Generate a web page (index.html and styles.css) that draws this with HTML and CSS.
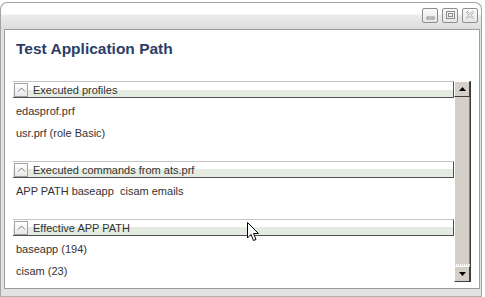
FILE: index.html
```html
<!DOCTYPE html>
<html lang="en">
<head>
    <meta charset="UTF-8">
    <title>Test Application Path</title>
    <link rel="stylesheet" href="styles.css">
</head>
<body>
    <div class="window">
        <div class="titlebar">
            <span class="winbtn">
                <svg width="14" height="13" viewBox="0 0 14 13"><rect x="4" y="8" width="7" height="2" fill="none" stroke="#8c8c8c" stroke-width="1"/></svg>
            </span>
            <span class="winbtn">
                <svg width="14" height="13" viewBox="0 0 14 13"><rect x="3.5" y="2.5" width="8" height="7" fill="none" stroke="#8c8c8c"/><rect x="5.5" y="4.5" width="4" height="3" fill="none" stroke="#8c8c8c"/></svg>
            </span>
            <span class="winbtn">
                <svg width="14" height="13" viewBox="0 0 14 13"><path d="M3.5 2.5 L10.5 9.5 M10.5 2.5 L3.5 9.5" stroke="#b4b4b4" stroke-width="2.2" fill="none"/><path d="M3.5 2.5 L10.5 9.5 M10.5 2.5 L3.5 9.5" stroke="#ffffff" stroke-width="0.8" fill="none"/></svg>
            </span>
        </div>
        <div class="panel">
            <h1 class="title">Test Application Path</h1>
            <div class="scroller">
                <div class="content">
                    <div class="section">
                        <div class="sec-head">
                            <span class="toggle"><svg width="9" height="7" viewBox="0 0 9 7"><path d="M1 5.5 L4.5 2 L8 5.5" stroke="#7a7a7a" fill="none"/></svg></span>
                            <span class="sec-label">Executed profiles</span>
                        </div>
                        <div class="item">edasprof.prf</div>
                        <div class="item">usr.prf (role Basic)</div>
                    </div>
                    <div class="section">
                        <div class="sec-head">
                            <span class="toggle"><svg width="9" height="7" viewBox="0 0 9 7"><path d="M1 5.5 L4.5 2 L8 5.5" stroke="#7a7a7a" fill="none"/></svg></span>
                            <span class="sec-label">Executed commands from ats.prf</span>
                        </div>
                        <div class="item">APP PATH baseapp&nbsp; cisam emails</div>
                    </div>
                    <div class="section">
                        <div class="sec-head">
                            <span class="toggle"><svg width="9" height="7" viewBox="0 0 9 7"><path d="M1 5.5 L4.5 2 L8 5.5" stroke="#7a7a7a" fill="none"/></svg></span>
                            <span class="sec-label">Effective APP PATH</span>
                        </div>
                        <div class="item">baseapp (194)</div>
                        <div class="item">cisam (23)</div>
                    </div>
                </div>
                <div class="scrollbar">
                    <span class="sb-btn"><svg width="7" height="4" viewBox="0 0 7 4"><path d="M3.5 0 L7 4 L0 4 Z" fill="#000"/></svg></span>
                    <span class="sb-thumb"></span>
                    <span class="sb-rest"></span>
                    <span class="sb-btn"><svg width="7" height="4" viewBox="0 0 7 4"><path d="M0 0 L7 0 L3.5 4 Z" fill="#000"/></svg></span>
                </div>
            </div>
        </div>
        <svg class="cursor" width="13" height="20" viewBox="0 0 13 20">
            <path d="M0.5 0.5 L0.5 16 L4 12.5 L6.5 18.5 L9 17.5 L6.5 11.5 L11.5 11.5 Z" fill="#fff" stroke="#000" stroke-width="1"/>
        </svg>
    </div>
</body>
</html>
```

FILE: styles.css
```css
body {
    margin: 0;
    background: #ffffff;
    font-family: "Liberation Sans", Arial, sans-serif;
}
.window {
    position: relative;
    width: 480px;
    height: 293px;
    margin-top: 2px;
    border: 1px solid #a4a4a4;
    border-bottom-color: #b0b0b0;
    border-radius: 7px 7px 0 0;
    background: #e2e2e2;
}
.titlebar {
    height: 26px;
    display: flex;
    justify-content: flex-end;
    gap: 4px;
    padding: 5px 3px 0 0;
    box-sizing: border-box;
    border-radius: 7px 7px 0 0;
    background: linear-gradient(#ffffff 0, #ffffff 11px, #ececec 12px, #dddddd 26px);
}
.winbtn {
    width: 14px;
    height: 13px;
    border: 1px solid #8e8e8e;
    border-radius: 2px;
    background: linear-gradient(#fbfbfb, #e6e6e6);
    display: flex;
}
.panel {
    margin: 0 1px 0 3px;
    height: 260px;
    border: 1px solid #9c9c9c;
    background: #ffffff;
    box-sizing: border-box;
}
.title {
    margin: 0;
    padding: 9px 0 0 11px;
    height: 51px;
    box-sizing: border-box;
    font-size: 15.5px;
    line-height: 19px;
    font-weight: bold;
    color: #2c3e68;
}
.scroller {
    display: flex;
    margin-left: 8px;
    width: 458px;
    height: 201px;
    overflow: hidden;
}
.content {
    flex: 1;
    overflow: hidden;
}
.section {
    padding-bottom: 17px;
}
.sec-head {
    height: 15px;
    display: flex;
    align-items: center;
    gap: 5px;
    border-top: 1px solid #c4c4c4;
    border-bottom: 1px solid #505050;
    border-right: 1px solid #505050;
    background: linear-gradient(#ffffff 0, #ffffff 50%, #e4ece2 50%, #e4ece2 100%);
}
.toggle {
    width: 12px;
    height: 12px;
    margin-left: 1px;
    border: 1px solid #a0a0a0;
    background: linear-gradient(#ffffff, #e8e8e8);
    display: flex;
    align-items: center;
    justify-content: center;
}
.sec-label {
    font-size: 11px;
    color: #333333;
}
.item {
    padding-left: 3px;
    line-height: 22px;
    font-size: 11px;
    color: #333333;
}
.section .sec-head + .item {
    margin-top: 2px;
}
.scrollbar {
    width: 16px;
    display: flex;
    flex-direction: column;
    background: #d4d0c8;
    border-right: 1px solid #3c3c3c;
}
.sb-btn {
    height: 16px;
    box-sizing: border-box;
    border: 1px solid;
    border-color: #ffffff #404040 #404040 #ffffff;
    background: #d4d0c8;
    display: flex;
    align-items: center;
    justify-content: center;
}
.sb-thumb {
    flex: 1;
    border-left: 1px solid #ffffff;
    border-right: 1px solid #808080;
}
.sb-rest {
    height: 2px;
    background: repeating-linear-gradient(90deg, #ffffff 0 1px, #d4d0c8 1px 2px);
}
.cursor {
    position: absolute;
    left: 246px;
    top: 219px;
}
```
